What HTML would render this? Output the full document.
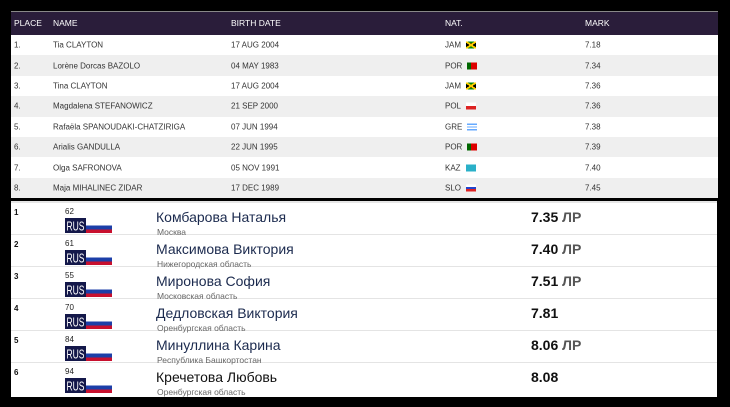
<!DOCTYPE html>
<html><head><meta charset="utf-8"><style>
*{margin:0;padding:0;box-sizing:border-box}
body{width:730px;height:407px;background:#000;position:relative;overflow:hidden;font-family:"Liberation Sans",sans-serif}
.top{position:absolute;left:11px;top:11px;width:707px;background:#fff}
.hd{height:24px;background:#2a1d3a;color:#fff;font-size:8.5px;position:relative;border-top:1px solid #888}
.r{height:20.4px;position:relative;font-size:8px;color:#333}
.c{position:absolute;top:50%;transform:translateY(-50%);white-space:nowrap}
.hd .c{top:11px}
.f{display:inline-block;width:10px;height:7px;vertical-align:-1px;margin-left:5px}
.jam{background:linear-gradient(34deg,transparent 42%,#fc0 42% 58%,transparent 58%),linear-gradient(-34deg,transparent 42%,#fc0 42% 58%,transparent 58%),linear-gradient(#080 25%,#000 25% 75%,#080 75%)}
.bot{position:absolute;left:11px;top:201px;width:706px;height:196px;background:#fff;border-top:2px solid #e6e6e6;font-family:"Liberation Sans","DejaVu Sans",sans-serif}
.b{height:32px;border-bottom:1px solid #e4e4e4;position:relative}
.pl{position:absolute;left:3px;top:5px;font-size:8px;font-weight:bold;color:#111}
.bib{position:absolute;left:54px;top:4px;font-size:8px;color:#222}
.rus{position:absolute;left:54px;top:15px}
.fl{position:absolute;left:75px;top:19px;width:26px;height:11px;background:linear-gradient(#fff 0 33%,#1c3fa8 33% 66%,#c8102e 66%)}
.nm{position:absolute;left:145px;top:6px;font-size:14px;color:#1b2a4e}
.rg{position:absolute;left:146px;top:24px;font-size:8.5px;color:#666}
.mk{position:absolute;left:520px;top:6px;font-size:14px;font-weight:bold;color:#111}
.mk span{color:#555}
</style></head><body>
<div class="top">
<div class="hd"><span class="c" style="left:3px">PLACE</span><span class="c" style="left:42px">NAME</span><span class="c" style="left:220px">BIRTH DATE</span><span class="c" style="left:434px">NAT.</span><span class="c" style="left:574px">MARK</span></div>
<div>
<div class="r" style="background:#fff"><span class="c" style="left:3px">1.</span><span class="c" style="left:42px">Tia CLAYTON</span><span class="c" style="left:220px">17 AUG 2004</span><span class="c" style="left:434px">JAM<i class="f jam"></i></span><span class="c" style="left:574px">7.18</span></div>
<div class="r" style="background:#efefef"><span class="c" style="left:3px">2.</span><span class="c" style="left:42px">Lorène Dorcas BAZOLO</span><span class="c" style="left:220px">04 MAY 1983</span><span class="c" style="left:434px">POR<i class="f" style="background:linear-gradient(90deg,#060 40%,#d00 40%)"></i></span><span class="c" style="left:574px">7.34</span></div>
<div class="r" style="background:#fff"><span class="c" style="left:3px">3.</span><span class="c" style="left:42px">Tina CLAYTON</span><span class="c" style="left:220px">17 AUG 2004</span><span class="c" style="left:434px">JAM<i class="f jam"></i></span><span class="c" style="left:574px">7.36</span></div>
<div class="r" style="background:#efefef"><span class="c" style="left:3px">4.</span><span class="c" style="left:42px">Magdalena STEFANOWICZ</span><span class="c" style="left:220px">21 SEP 2000</span><span class="c" style="left:434px">POL<i class="f" style="background:linear-gradient(#fff 50%,#d22 50%)"></i></span><span class="c" style="left:574px">7.36</span></div>
<div class="r" style="background:#fff"><span class="c" style="left:3px">5.</span><span class="c" style="left:42px">Rafaëla SPANOUDAKI-CHATZIRIGA</span><span class="c" style="left:220px">07 JUN 1994</span><span class="c" style="left:434px">GRE<i class="f" style="background:repeating-linear-gradient(#6af 0 1.4px,#fff 1.4px 2.8px)"></i></span><span class="c" style="left:574px">7.38</span></div>
<div class="r" style="background:#efefef"><span class="c" style="left:3px">6.</span><span class="c" style="left:42px">Arialis GANDULLA</span><span class="c" style="left:220px">22 JUN 1995</span><span class="c" style="left:434px">POR<i class="f" style="background:linear-gradient(90deg,#060 40%,#d00 40%)"></i></span><span class="c" style="left:574px">7.39</span></div>
<div class="r" style="background:#fff"><span class="c" style="left:3px">7.</span><span class="c" style="left:42px">Olga SAFRONOVA</span><span class="c" style="left:220px">05 NOV 1991</span><span class="c" style="left:434px">KAZ<i class="f" style="background:#2ab0c8"></i></span><span class="c" style="left:574px">7.40</span></div>
<div class="r" style="background:#efefef"><span class="c" style="left:3px">8.</span><span class="c" style="left:42px">Maja MIHALINEC ZIDAR</span><span class="c" style="left:220px">17 DEC 1989</span><span class="c" style="left:434px">SLO<i class="f" style="background:linear-gradient(#fff 33%,#24c 33% 66%,#d22 66%)"></i></span><span class="c" style="left:574px">7.45</span></div>
</div></div>
<div class="bot">
<div class="b"><span class="pl">1</span><span class="bib">62</span><svg class="rus" width="21" height="15"><rect width="21" height="15" fill="#14184a"/><text x="1.5" y="12.5" fill="#fff" font-size="13" font-family="Liberation Sans" textLength="18" lengthAdjust="spacingAndGlyphs">RUS</text></svg><span class="fl"></span><span class="nm">Комбарова Наталья</span><span class="rg">Москва</span><span class="mk">7.35 <span>ЛР</span></span></div>
<div class="b"><span class="pl">2</span><span class="bib">61</span><svg class="rus" width="21" height="15"><rect width="21" height="15" fill="#14184a"/><text x="1.5" y="12.5" fill="#fff" font-size="13" font-family="Liberation Sans" textLength="18" lengthAdjust="spacingAndGlyphs">RUS</text></svg><span class="fl"></span><span class="nm">Максимова Виктория</span><span class="rg">Нижегородская область</span><span class="mk">7.40 <span>ЛР</span></span></div>
<div class="b"><span class="pl">3</span><span class="bib">55</span><svg class="rus" width="21" height="15"><rect width="21" height="15" fill="#14184a"/><text x="1.5" y="12.5" fill="#fff" font-size="13" font-family="Liberation Sans" textLength="18" lengthAdjust="spacingAndGlyphs">RUS</text></svg><span class="fl"></span><span class="nm">Миронова София</span><span class="rg">Московская область</span><span class="mk">7.51 <span>ЛР</span></span></div>
<div class="b"><span class="pl">4</span><span class="bib">70</span><svg class="rus" width="21" height="15"><rect width="21" height="15" fill="#14184a"/><text x="1.5" y="12.5" fill="#fff" font-size="13" font-family="Liberation Sans" textLength="18" lengthAdjust="spacingAndGlyphs">RUS</text></svg><span class="fl"></span><span class="nm">Дедловская Виктория</span><span class="rg">Оренбургская область</span><span class="mk">7.81</span></div>
<div class="b"><span class="pl">5</span><span class="bib">84</span><svg class="rus" width="21" height="15"><rect width="21" height="15" fill="#14184a"/><text x="1.5" y="12.5" fill="#fff" font-size="13" font-family="Liberation Sans" textLength="18" lengthAdjust="spacingAndGlyphs">RUS</text></svg><span class="fl"></span><span class="nm">Минуллина Карина</span><span class="rg">Республика Башкортостан</span><span class="mk">8.06 <span>ЛР</span></span></div>
<div class="b" style="border:none"><span class="pl">6</span><span class="bib">94</span><svg class="rus" width="21" height="15"><rect width="21" height="15" fill="#14184a"/><text x="1.5" y="12.5" fill="#fff" font-size="13" font-family="Liberation Sans" textLength="18" lengthAdjust="spacingAndGlyphs">RUS</text></svg><span class="fl"></span><span class="nm" style="color:#111">Кречетова Любовь</span><span class="rg">Оренбургская область</span><span class="mk">8.08</span></div>
</div>
</body></html>
